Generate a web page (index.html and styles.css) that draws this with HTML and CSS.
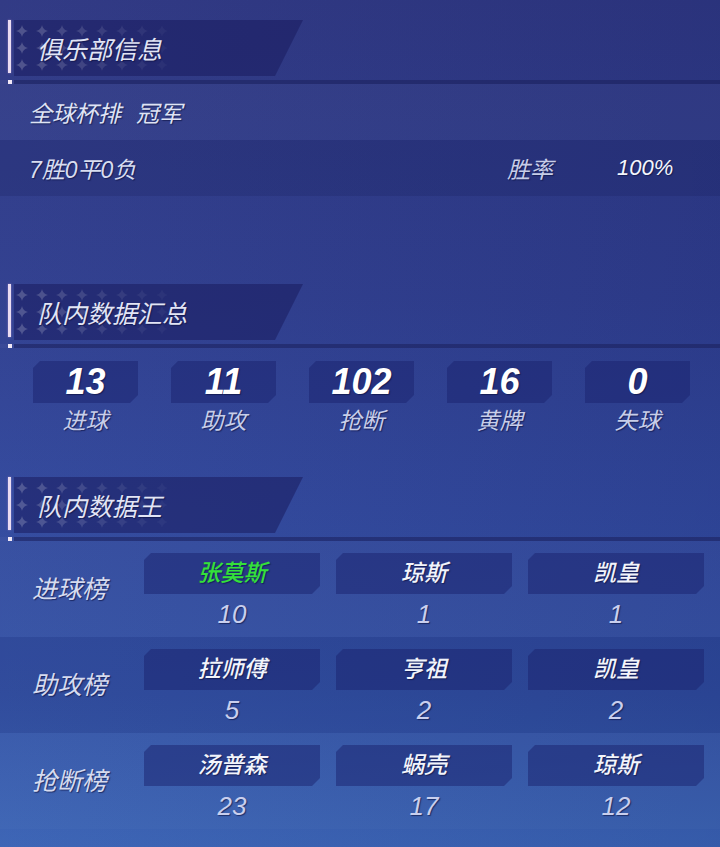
FILE: index.html
```
<!DOCTYPE html>
<html lang="zh-CN">

<head>
    <meta charset="UTF-8">
    <meta name="viewport" content="width=device-width, initial-scale=1.0">
    <title>俱乐部信息</title>

    <link rel="stylesheet" href="styles.css">

</head>

<body>
    <svg width="0" height="0" class="defs">
        <defs>
            <path id="star" d="M0,-6 Q1,-1 6,0 Q1,1 0,6 Q-1,1 -6,0 Q-1,-1 0,-6Z" />
            <g id="stars" fill="#fff">
                <use href="#star" x="8" y="11" opacity="0.2" />
                <use href="#star" x="8" y="28" opacity="0.2" />
                <use href="#star" x="8" y="45" opacity="0.2" />
                <use href="#star" x="28" y="11" opacity="0.18" />
                <use href="#star" x="28" y="28" opacity="0.18" />
                <use href="#star" x="28" y="45" opacity="0.18" />
                <use href="#star" x="48" y="11" opacity="0.15" />
                <use href="#star" x="48" y="28" opacity="0.15" />
                <use href="#star" x="48" y="45" opacity="0.15" />
                <use href="#star" x="68" y="11" opacity="0.13" />
                <use href="#star" x="68" y="28" opacity="0.13" />
                <use href="#star" x="68" y="45" opacity="0.13" />
                <use href="#star" x="88" y="11" opacity="0.1" />
                <use href="#star" x="88" y="28" opacity="0.1" />
                <use href="#star" x="88" y="45" opacity="0.1" />
                <use href="#star" x="108" y="11" opacity="0.08" />
                <use href="#star" x="108" y="28" opacity="0.08" />
                <use href="#star" x="108" y="45" opacity="0.08" />
                <use href="#star" x="128" y="11" opacity="0.06" />
                <use href="#star" x="128" y="28" opacity="0.06" />
                <use href="#star" x="128" y="45" opacity="0.06" />
                <use href="#star" x="148" y="11" opacity="0.04" />
                <use href="#star" x="148" y="28" opacity="0.04" />
                <use href="#star" x="148" y="45" opacity="0.04" />
            </g>
        </defs>
    </svg>

    <!-- 俱乐部信息 -->
    <div class="head head-first">
        <div class="head-band">
            <svg class="stars" width="170" height="56"><use href="#stars" /></svg>
            <h2>俱乐部信息</h2>
        </div>
    </div>
    <div class="head-line"><span class="dot"></span><span class="rule"></span></div>

    <div class="info-row light">
        <span>全球杯排</span>
        <span class="rank">冠军</span>
    </div>
    <div class="info-row dark">
        <span class="record">7胜0平0负</span>
        <span class="rate-label">胜率</span>
        <span class="rate">100%</span>
    </div>

    <!-- 队内数据汇总 -->
    <div class="head head-sum">
        <div class="head-band">
            <svg class="stars" width="170" height="56"><use href="#stars" /></svg>
            <h2>队内数据汇总</h2>
        </div>
    </div>
    <div class="head-line"><span class="dot"></span><span class="rule"></span></div>

    <div class="stats">
        <div class="stat">
            <div class="stat-box">13</div>
            <div class="stat-name">进球</div>
        </div>
        <div class="stat">
            <div class="stat-box">11</div>
            <div class="stat-name">助攻</div>
        </div>
        <div class="stat">
            <div class="stat-box">102</div>
            <div class="stat-name">抢断</div>
        </div>
        <div class="stat">
            <div class="stat-box">16</div>
            <div class="stat-name">黄牌</div>
        </div>
        <div class="stat">
            <div class="stat-box">0</div>
            <div class="stat-name">失球</div>
        </div>
    </div>

    <!-- 队内数据王 -->
    <div class="head head-king">
        <div class="head-band">
            <svg class="stars" width="170" height="56"><use href="#stars" /></svg>
            <h2>队内数据王</h2>
        </div>
    </div>
    <div class="head-line"><span class="dot"></span><span class="rule"></span></div>

    <div class="king-row row-a">
        <div class="king-label">进球榜</div>
        <div class="king-cell">
            <div class="name-box green">张莫斯</div>
            <div class="value">10</div>
        </div>
        <div class="king-cell">
            <div class="name-box">琼斯</div>
            <div class="value">1</div>
        </div>
        <div class="king-cell">
            <div class="name-box">凯皇</div>
            <div class="value">1</div>
        </div>
    </div>
    <div class="king-row row-b">
        <div class="king-label">助攻榜</div>
        <div class="king-cell">
            <div class="name-box">拉师傅</div>
            <div class="value">5</div>
        </div>
        <div class="king-cell">
            <div class="name-box">亨祖</div>
            <div class="value">2</div>
        </div>
        <div class="king-cell">
            <div class="name-box">凯皇</div>
            <div class="value">2</div>
        </div>
    </div>
    <div class="king-row row-c">
        <div class="king-label">抢断榜</div>
        <div class="king-cell">
            <div class="name-box">汤普森</div>
            <div class="value">23</div>
        </div>
        <div class="king-cell">
            <div class="name-box">蜗壳</div>
            <div class="value">17</div>
        </div>
        <div class="king-cell">
            <div class="name-box">琼斯</div>
            <div class="value">12</div>
        </div>
    </div>

</body>

</html>
```

FILE: styles.css
```
* {
    margin: 0;
    padding: 0;
    box-sizing: border-box;
}

html,
body {
    width: 720px;
    height: 847px;
    overflow: hidden;
}

body {
    font-family: "Liberation Sans", "Noto Sans CJK SC", sans-serif;
    font-style: italic;
    color: #dfe3f4;
    background:
        linear-gradient(90deg, rgba(255, 255, 255, 0.02), rgba(0, 0, 40, 0.08)),
        linear-gradient(180deg, #2e3783 0%, #2f3e8f 35%, #31489d 60%, #3352a6 82%, #3a63b5 100%);
    text-shadow: 1px 1px 1px rgba(10, 15, 60, 0.6);
}

.defs {
    position: absolute;
}

/* 标题栏 */
.head {
    height: 56px;
    margin-left: 8px;
    display: flex;
}

.head::before {
    content: "";
    width: 3px;
    height: 53px;
    margin-right: 3px;
    background: #eadcf2;
    box-shadow: 0 0 2px rgba(255, 200, 255, 0.5);
}

.head-first {
    margin-top: 20px;
}

.head-sum {
    margin-top: 88px;
}

.head-king {
    margin-top: 33px;
}

.head-band {
    width: 289px;
    height: 56px;
    position: relative;
    background: rgba(26, 28, 95, 0.55);
    clip-path: polygon(0 0, 289px 0, 261px 100%, 0 100%);
    display: flex;
    align-items: center;
}

.head-band .stars {
    position: absolute;
    left: 0;
    top: 0;
}

.head-band h2 {
    font-size: 25px;
    font-weight: normal;
    padding-left: 23px;
    color: #e2e5f5;
    position: relative;
}

.head-line {
    margin-top: 4px;
    height: 4px;
    display: flex;
    align-items: center;
    background: rgba(255, 255, 255, 0.03);
}

.head-line .dot {
    width: 4px;
    height: 4px;
    margin-left: 8px;
    background: #f1e8f6;
}

.head-line .rule {
    flex: 1;
    height: 4px;
    margin-left: 2px;
    background: rgba(22, 28, 90, 0.55);
}

/* 俱乐部信息 */
.info-row {
    height: 56px;
    display: flex;
    align-items: center;
    padding-left: 29px;
    font-size: 23px;
}

.info-row.light {
    background: rgba(255, 255, 255, 0.025);
}

.info-row.dark {
    background: rgba(15, 20, 80, 0.18);
}

.info-row .rank {
    margin-left: 15px;
}

.record {
    width: 478px;
    color: #d8ddf0;
}

.rate-label {
    width: 110px;
    color: #c7cde8;
}

.rate {
    font-size: 22px;
    color: #f4f6fc;
}

/* 队内数据汇总 */
.stats {
    display: flex;
    gap: 33px;
    padding: 13px 0 8px 33px;
}

.stat {
    width: 105px;
    text-align: center;
}

.stat-box {
    height: 42px;
    line-height: 42px;
    font-size: 36px;
    font-weight: bold;
    color: #fff;
    background: rgba(25, 34, 110, 0.5);
    clip-path: polygon(7px 0, 100% 0, 100% calc(100% - 8px), calc(100% - 8px) 100%, 0 100%, 0 7px);
}

.stat-name {
    margin-top: 3px;
    font-size: 23px;
    line-height: 30px;
    color: #c8cee9;
}

/* 队内数据王 */
.king-row {
    height: 96px;
    display: flex;
}

.row-a {
    background: rgba(255, 255, 255, 0.02);
}

.row-b {
    background: rgba(10, 20, 80, 0.12);
}

.row-c {
    background: rgba(255, 255, 255, 0.02);
}

.king-label {
    width: 144px;
    padding-left: 32px;
    font-size: 25px;
    line-height: 96px;
    color: #d6dbef;
}

.king-cell {
    width: 176px;
    margin-right: 16px;
    padding-top: 12px;
    text-align: center;
}

.name-box {
    height: 41px;
    line-height: 41px;
    font-size: 23px;
    font-weight: 500;
    color: #f2f4fb;
    background: rgba(25, 34, 110, 0.5);
    clip-path: polygon(7px 0, 100% 0, 100% calc(100% - 8px), calc(100% - 8px) 100%, 0 100%, 0 7px);
}

.name-box.green {
    color: #34e03a;
}

.value {
    margin-top: 5px;
    font-size: 26px;
    line-height: 30px;
    color: #c9cfee;
}
```
